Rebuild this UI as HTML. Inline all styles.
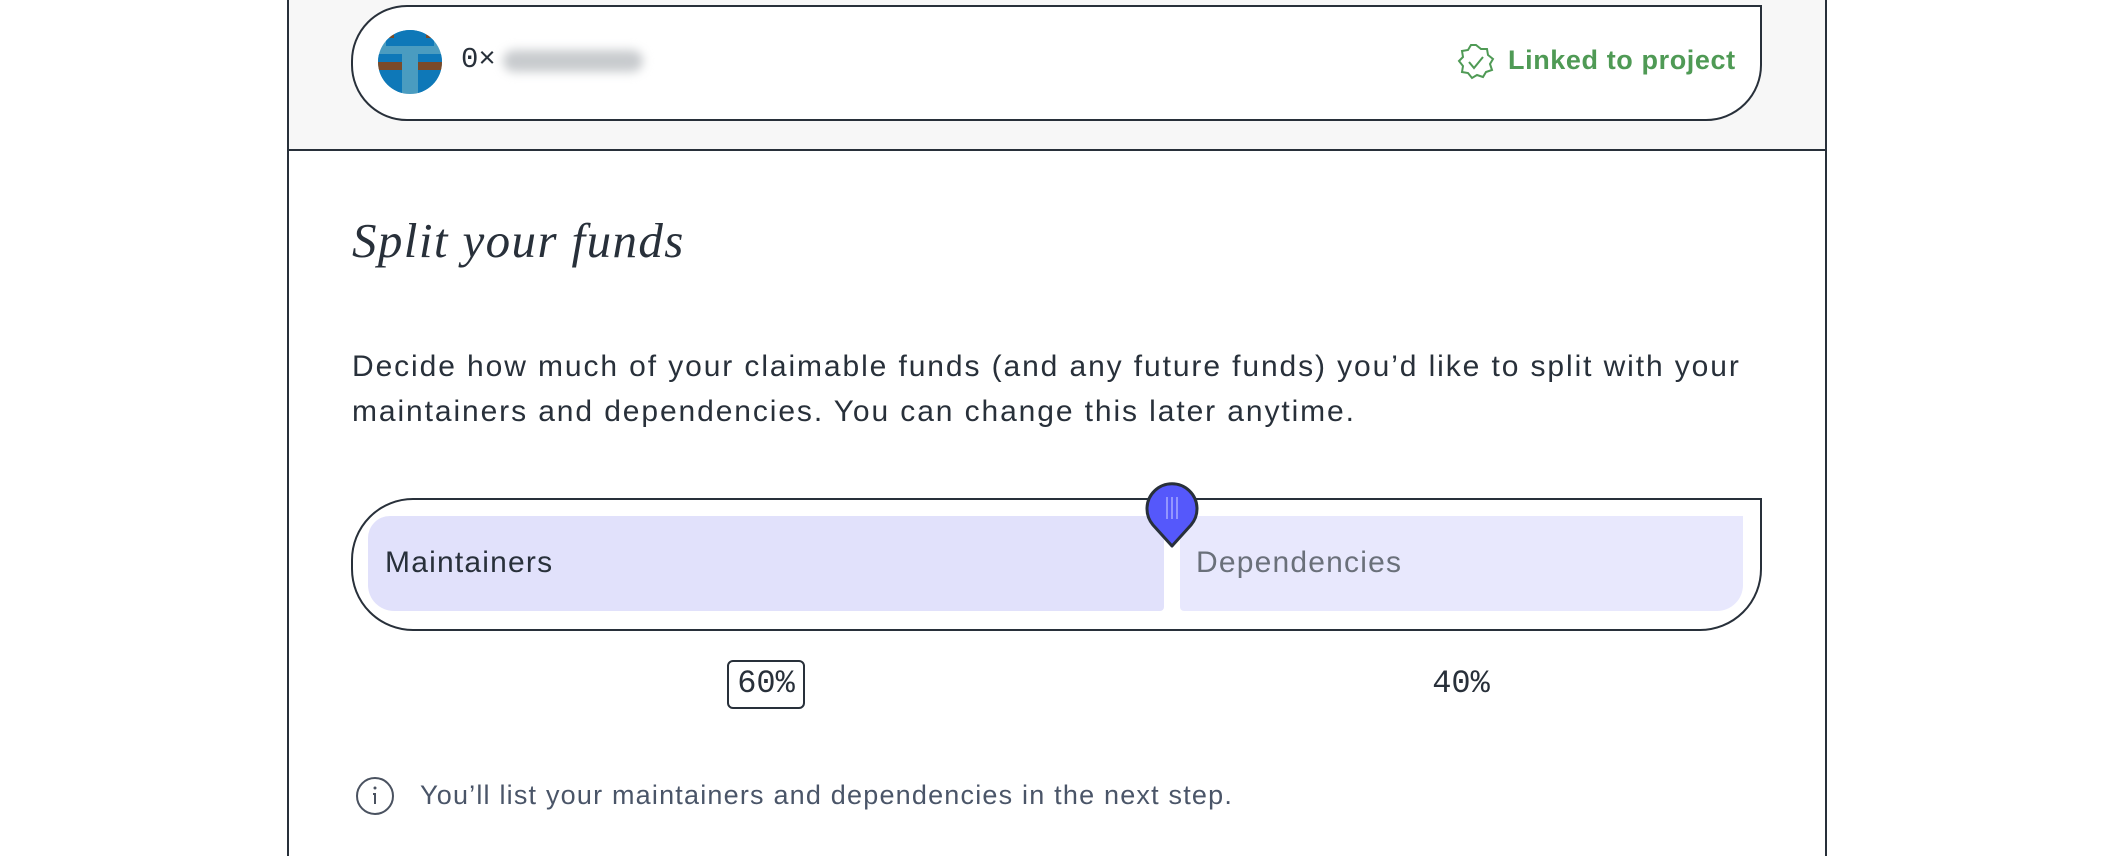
<!DOCTYPE html>
<html><head><meta charset="utf-8"><style>
body{margin:0;width:2124px;height:856px;background:#fff;position:relative;overflow:hidden;font-family:"Liberation Sans",sans-serif;color:#28303a}
.abs{position:absolute}
</style></head><body>
<div class="abs" style="left:287px;top:0;width:1536px;height:150px;background:#f7f7f7;border-left:2px solid #28303a;border-right:2px solid #28303a"></div>
<div class="abs" style="left:287px;top:149px;width:1540px;height:2px;background:#28303a"></div>
<div class="abs" style="left:287px;top:151px;width:2px;height:705px;background:#28303a"></div>
<div class="abs" style="left:1825px;top:151px;width:2px;height:705px;background:#28303a"></div>

<div class="abs" style="left:351px;top:5px;width:1407px;height:112px;border:2px solid #28303a;border-radius:56px 0 56px 56px;background:#fff"></div>
<svg class="abs" style="left:378px;top:30px" width="64" height="64" viewBox="0 0 8 8" shape-rendering="crispEdges">
<defs><clipPath id="c"><circle cx="4" cy="4" r="4"/></clipPath></defs>
<g clip-path="url(#c)">
<rect width="8" height="8" fill="#4a9cc0"/>
<rect x="1" y="0" width="1" height="1" fill="#7a4a28"/><rect x="6" y="0" width="1" height="1" fill="#7a4a28"/>
<rect x="2" y="0" width="4" height="1" fill="#0e78b8"/>
<rect x="1" y="1" width="6" height="1" fill="#0e78b8"/>
<rect x="0" y="3" width="3" height="1" fill="#0e78b8"/><rect x="5" y="3" width="3" height="1" fill="#0e78b8"/>
<rect x="0" y="4" width="3" height="1" fill="#7a4a28"/><rect x="5" y="4" width="3" height="1" fill="#7a4a28"/>
<rect x="0" y="5" width="3" height="3" fill="#0e78b8"/><rect x="5" y="5" width="3" height="3" fill="#0e78b8"/>
</g></svg>
<div class="abs" style="left:461px;top:43px;font:29px 'Liberation Mono',monospace;color:#28303a">0×</div>
<div class="abs" style="left:503px;top:50px;width:140px;height:22px;background:#c8cbce;border-radius:11px;filter:blur(5px)"></div>
<svg class="abs" style="left:1456px;top:42px" width="40" height="40" viewBox="0 0 40 40" fill="none" stroke="#4f9a55" stroke-width="2">
<path d="M20 3l5 4 6 0 1 6 5 4-3 5 2 6-6 2-3 5-6-2-5 3-4-5-6-1 1-6-4-5 4-4-1-6 6-1 3-5z"/>
<path d="M13 20l5 6 9-11"/></svg>
<div class="abs" style="left:1508px;top:45px;font:bold 27px 'Liberation Sans',sans-serif;letter-spacing:0.6px;color:#4f9a55">Linked to project</div>

<div class="abs" style="left:352px;top:212px;font:italic 49px 'Liberation Serif',serif;letter-spacing:1.4px;color:#28303a">Split your funds</div>
<div class="abs" style="left:352px;top:344px;width:1420px;font-size:30px;letter-spacing:1.9px;line-height:45px;color:#28303a">Decide how much of your claimable funds (and any future funds) you’d like to split with your maintainers and dependencies. You can change this later anytime.</div>

<div class="abs" style="left:351px;top:498px;width:1407px;height:129px;border:2px solid #28303a;border-radius:62px 0 62px 62px"></div>
<div class="abs" style="left:368px;top:516px;width:796px;height:95px;background:#e1e1fb;border-radius:22px 0 4px 26px"></div>
<div class="abs" style="left:1180px;top:516px;width:563px;height:95px;background:#e8e8fd;border-radius:4px 0 26px 4px"></div>
<div class="abs" style="left:385px;top:546px;font-size:30px;letter-spacing:1.2px;color:#28303a">Maintainers</div>
<div class="abs" style="left:1196px;top:546px;font-size:30px;letter-spacing:1.2px;color:#6a707a">Dependencies</div>
<svg class="abs" style="left:1145px;top:481px" width="54" height="68" viewBox="0 0 54 68">
<path d="M27 65L8 44A25 25 0 1 1 46 44Z" fill="#5558fb" stroke="#28303a" stroke-width="3" stroke-linejoin="round"/>
<path d="M22 16v22M27 16v22M32 16v22" stroke="#a8aaff" stroke-width="1.5"/></svg>

<div class="abs" style="left:727px;top:660px;width:74px;height:45px;border:2px solid #28303a;border-radius:6px"></div>
<div class="abs" style="left:727px;top:665px;width:78px;text-align:center;font:32px 'Liberation Mono',monospace">60%</div>
<div class="abs" style="left:1420px;top:665px;width:82px;text-align:center;font:32px 'Liberation Mono',monospace">40%</div>

<svg class="abs" style="left:355px;top:776px" width="40" height="40" viewBox="0 0 40 40" fill="none" stroke="#4a5260" stroke-width="2">
<circle cx="20" cy="20" r="18"/><circle cx="20" cy="12" r="1.5" fill="#4a5260" stroke="none"/><path d="M18 18h2v10"/></svg>
<div class="abs" style="left:420px;top:780px;font-size:27px;letter-spacing:1.2px;color:#4a5568">You’ll list your maintainers and dependencies in the next step.</div>
</body></html>
